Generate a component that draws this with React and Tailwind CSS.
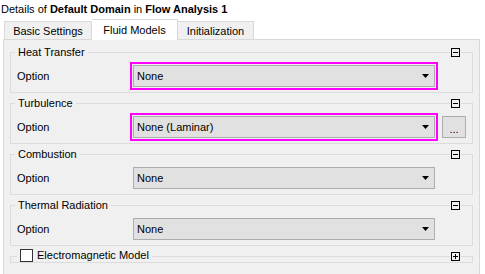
import React from "react";

const Toggle = ({ open }) => (
  <span className="absolute -top-[5px] right-[11px] px-px bg-[#f0f0f0]">
    <span className="relative block w-[9px] h-[9px] border border-black bg-[#f0f0f0]">
      <span className="absolute left-[1px] top-[3px] w-[5px] h-px bg-black"></span>
      {open ? null : <span className="absolute left-[3px] top-[1px] w-px h-[5px] bg-black"></span>}
    </span>
  </span>
);

const Combo = ({ value, highlight }) => (
  <div
    className={
      "w-[302px] h-[22px] border border-[#adadad] bg-[#e1e1e1] flex items-center justify-between pl-[3px] pr-[5px] " +
      (highlight ? "outline-2 outline-offset-1 outline-[#ff00ff]" : "")
    }
  >
    <span>{value}</span>
    <svg width="7" height="4" viewBox="0 0 7 4">
      <polygon points="0,0 7,0 3.5,4" fill="#000" />
    </svg>
  </div>
);

const Group = ({ title, value, highlight, more, first }) => (
  <div className={"relative border border-[#dcdcdc] " + (first ? "" : "mt-[10px]")}>
    <span className="absolute -top-[7px] left-[4px] px-[3px] bg-[#f0f0f0] leading-[13px]">{title}</span>
    <Toggle open />
    <div className="flex items-center h-[22px] mt-[12px] mb-[5px] pl-[6px]">
      <span className="w-[116px]">Option</span>
      <Combo value={value} highlight={highlight} />
      {more && (
        <div className="ml-[7px] w-[24px] h-[22px] border border-[#adadad] bg-[#e1e1e1] flex items-center justify-center leading-none pt-[4px]">
          ...
        </div>
      )}
    </div>
  </div>
);

export default function App() {
  const groups = [
    { title: "Heat Transfer", value: "None", highlight: true },
    { title: "Turbulence", value: "None (Laminar)", highlight: true, more: true },
    { title: "Combustion", value: "None" },
    { title: "Thermal Radiation", value: "None" },
  ];

  return (
    <div className="w-[485px] h-[274px] overflow-hidden bg-white text-black text-[11px] font-['Liberation_Sans',Arial,sans-serif]">
      {/* header */}
      <div className="h-[18px] leading-[18px] pl-px">
        Details of <b>Default Domain</b> in <b>Flow Analysis 1</b>
      </div>

      {/* tabs */}
      <div className="flex items-end h-[21px] pl-[4px]">
        <div className="h-[18px] w-[88px] border border-b-0 border-[#d9d9d9] bg-[#f0f0f0] flex items-center justify-center pt-px">
          Basic Settings
        </div>
        <div className="relative z-10 -mb-px h-[21px] w-[86px] border border-b-0 border-l-0 border-[#d9d9d9] bg-white flex items-center justify-center">
          Fluid Models
        </div>
        <div className="h-[18px] w-[76px] border border-b-0 border-l-0 border-[#d9d9d9] bg-[#f0f0f0] flex items-center justify-center pt-px">
          Initialization
        </div>
      </div>

      {/* panel */}
      <div className="ml-[3px] w-[477px] h-[260px] border border-[#d9d9d9] bg-[#f0f0f0] pt-[12px] px-[6px]">
        {groups.map((g, i) => (
          <Group key={g.title} {...g} first={i === 0} />
        ))}

        <div className="relative mt-[10px] h-[7px] border border-[#dcdcdc]">
          <span className="absolute -top-[8px] left-[6px] px-[3px] bg-[#f0f0f0] h-[13px] flex items-center gap-[4px]">
            <span className="w-[13px] h-[13px] border border-[#333] bg-white"></span>
            <span>Electromagnetic Model</span>
          </span>
          <Toggle />
        </div>
      </div>
    </div>
  );
}
